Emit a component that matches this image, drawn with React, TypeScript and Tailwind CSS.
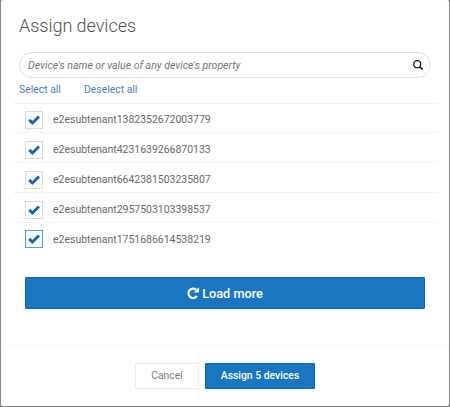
import React from "react";

const devices = [
  "e2esubtenant1382352672003779",
  "e2esubtenant4231639266870133",
  "e2esubtenant6642381503235807",
  "e2esubtenant2957503103398537",
  "e2esubtenant1751686614538219",
];

function Check() {
  return (
    <svg viewBox="0 0 12 10" className="h-[10px] w-[12px]">
      <path d="M1.2 4.9 4.4 8 11 1.5" fill="none" stroke="#1168b8" strokeWidth="2.9" />
    </svg>
  );
}

function DeviceRow({ name, first, focused }: { name: string; first: boolean; focused: boolean }) {
  return (
    <li
      className={`flex items-start border-t border-[#f3f3f3] pl-3 ${
        first ? "h-[29px] pt-[7px]" : "h-[30px] pt-[8px]"
      }`}
    >
      <span
        className={`flex size-[18px] shrink-0 items-center justify-center border ${
          focused ? "border-[#4f9be0] bg-[#f8fcff]" : "border-[#dadada]"
        } ${first || !focused ? "" : "-mt-px"}`}
      >
        <Check />
      </span>
      <span className="ml-[10px] whitespace-nowrap pt-px text-[10.5px] leading-4 tracking-[-0.02px] text-[#686868]">
        {name}
      </span>
    </li>
  );
}

export default function App() {
  return (
    <div className="flex h-[407px] w-[450px] flex-col overflow-hidden bg-[#858585] font-['Roboto',sans-serif]">
      <main className="mx-px mb-px flex grow flex-col rounded-[2px] bg-white">
        <h1 className="ml-[18px] mt-[14px] h-6 whitespace-nowrap text-[18px] font-light leading-6 tracking-[-0.03px] text-[#505050]">
          Assign devices
        </h1>
        <div className="ml-[18px] mt-[14px] flex h-[26px] w-[412px] items-center justify-between rounded-full border border-[#dcdcdc] pl-2 pr-[7px]">
          <span className="whitespace-nowrap pt-px text-[10.5px] italic text-[#747474]">
            Device's name or value of any device's property
          </span>
          <svg viewBox="0 0 10 10" className="size-[10px]" fill="none" stroke="#111111">
            <circle cx="4.2" cy="4.2" r="3.5" strokeWidth="1.3" />
            <path d="m6.7 6.7 2.9 2.9" strokeWidth="1.6" />
          </svg>
        </div>
        <nav className="ml-[18px] mt-[4px] flex h-[16px] whitespace-nowrap text-[10.4px] leading-4 text-[#4c7dc0]">
          <a className="w-[65px]">Select all</a>
          <a>Deselect all</a>
        </nav>
        <ul className="ml-3 mt-[5px] h-[150px] w-[425px] shrink-0">
          {devices.map((name, i) => (
            <DeviceRow key={name} name={name} first={i === 0} focused={i === 4} />
          ))}
        </ul>
        <button className="ml-6 mt-[24px] flex h-8 w-[400px] items-center justify-center gap-[3px] rounded-[1px] border border-[#0967b8] bg-[#1a76c1] pt-px text-[12.7px] font-medium text-white">
          <svg viewBox="0 0 12 12" className="-mt-px size-[12px]">
            <path d="M10 9A4.7 4.7 0 1 1 9.1 2.6" fill="none" stroke="white" strokeWidth="2.2" />
            <path d="M12 .2v5.4H6.6Z" fill="white" />
          </svg>
          <span>Load more</span>
        </button>
        <footer className="mt-[36px] flex grow justify-start gap-[6px] border-t border-[#f5f5f5] pl-[134px] pt-[17px] text-[10.4px]">
          <button className="h-[26px] w-[64px] rounded-[1px] border border-[#e9e9e9] text-[#7c7c7c]">Cancel</button>
          <button className="h-[26px] w-[110px] whitespace-nowrap rounded-[1px] border border-[#0967b8] bg-[#1a76c1] font-medium text-white">
            Assign 5 devices
          </button>
        </footer>
      </main>
    </div>
  );
}
